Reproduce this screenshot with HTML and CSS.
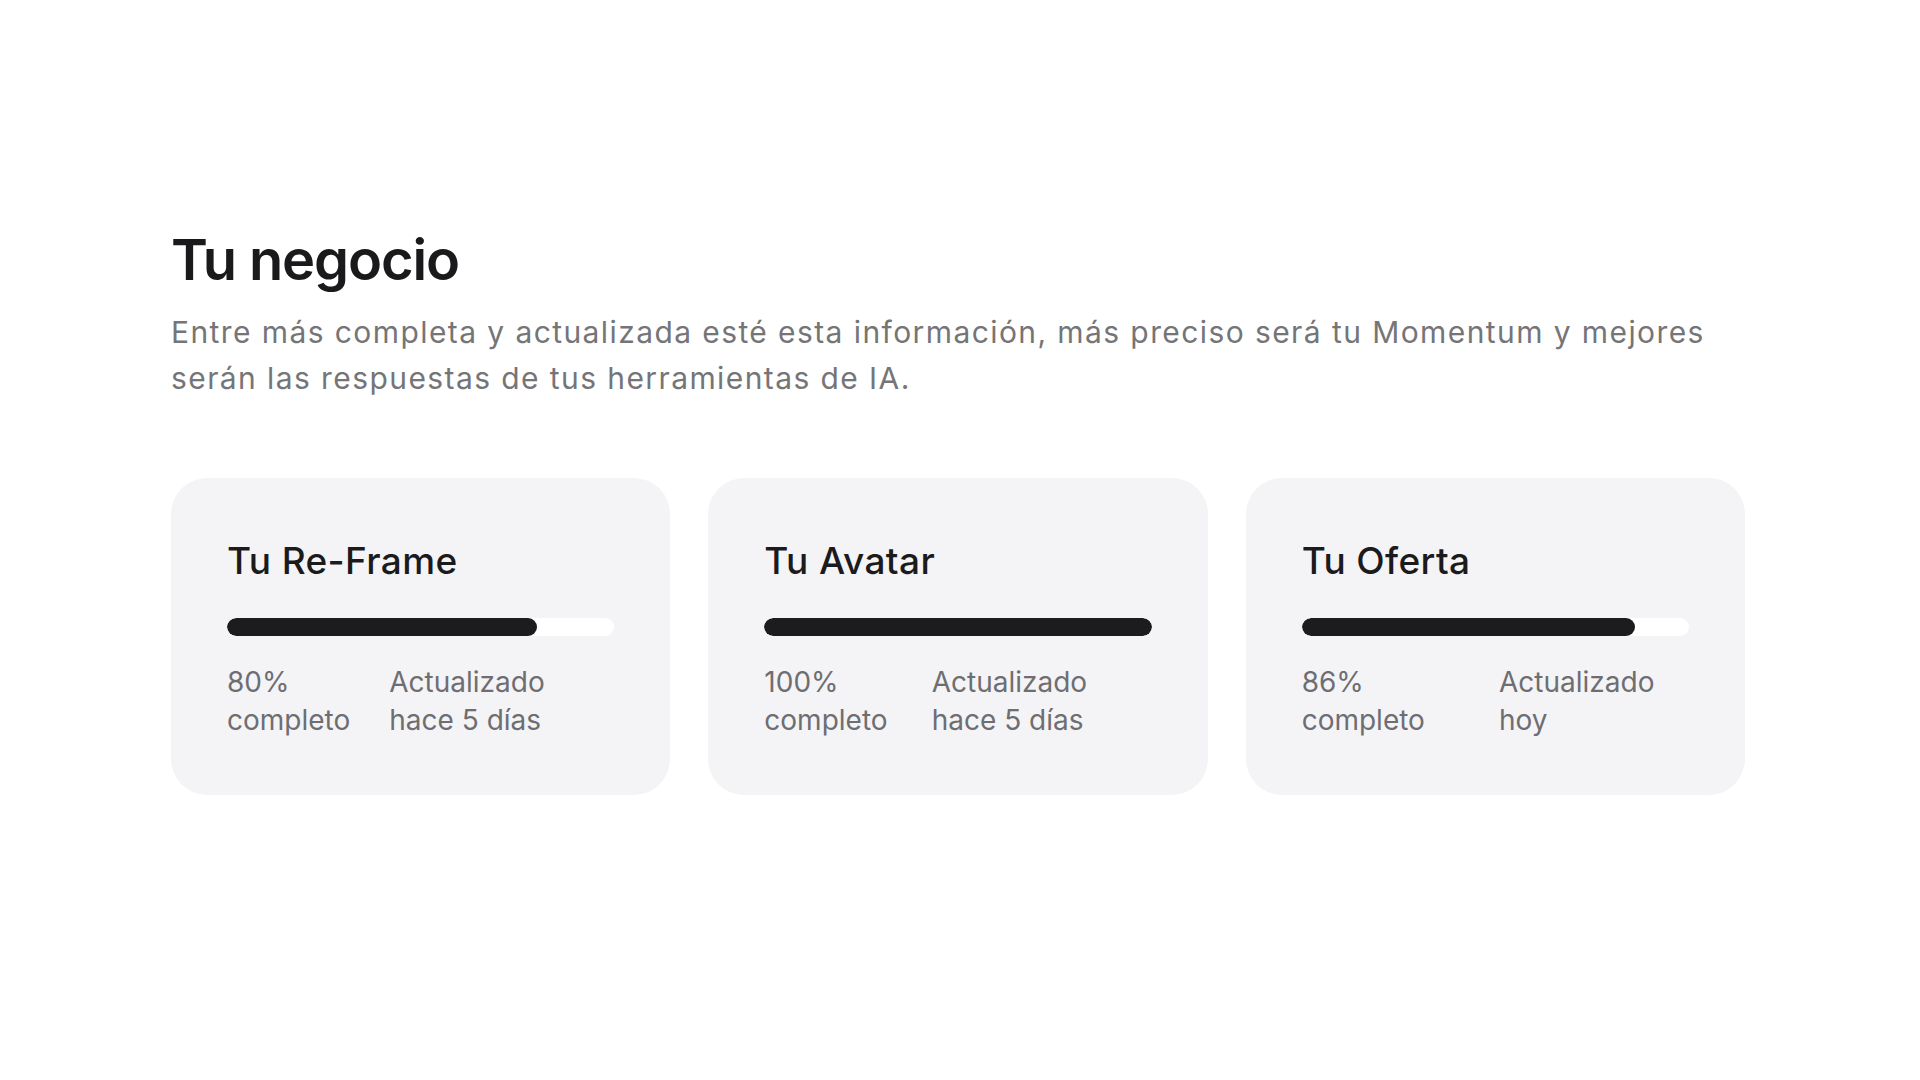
FILE: index.html
```html
<!DOCTYPE html>
<html lang="es">
<head>
<meta charset="utf-8">
<title>Tu negocio</title>
<link rel="stylesheet" href="styles.css">
</head>
<body>
<main class="page">
  <section class="business">
    <h1 class="title">Tu negocio</h1>
    <p class="lead">Entre más completa y actualizada esté esta información, más preciso será tu Momentum y mejores serán las respuestas de tus herramientas de IA.</p>
    <div class="cards">
      <article class="card">
        <h2 class="card-title">Tu Re-Frame</h2>
        <div class="track"><div class="fill" style="width:80%"></div></div>
        <div class="stats">
          <span class="stat">80% completo</span>
          <span class="stat">Actualizado hace 5 días</span>
        </div>
      </article>
      <article class="card">
        <h2 class="card-title">Tu Avatar</h2>
        <div class="track"><div class="fill" style="width:100%"></div></div>
        <div class="stats">
          <span class="stat">100% completo</span>
          <span class="stat">Actualizado hace 5 días</span>
        </div>
      </article>
      <article class="card">
        <h2 class="card-title">Tu Oferta</h2>
        <div class="track"><div class="fill" style="width:86%"></div></div>
        <div class="stats">
          <span class="stat">86% completo</span>
          <span class="stat">Actualizado hoy</span>
        </div>
      </article>
    </div>
  </section>
</main>
</body>
</html>
```

FILE: styles.css
```css
* { box-sizing: border-box; }
html, body { margin: 0; padding: 0; background: #ffffff; }
body {
  font-family: Inter, "Noto Sans", "Liberation Sans", sans-serif;
  color: #1b1b1d;
}
.page {
  padding: 227px 175px 0 171px;
}
.title {
  margin: 0;
  font-size: 56px;
  line-height: 1.2;
  font-weight: 600;
  letter-spacing: -0.02em;
  color: #1a1a1c;
}
.lead {
  margin: 16px 0 0;
  font-size: 30px;
  line-height: 45.5px;
  font-weight: 400;
  letter-spacing: 0.047em;
  color: #757578;
}
.cards {
  margin-top: 77px;
  display: grid;
  grid-template-columns: repeat(3, 1fr);
  gap: 38px;
}
.card {
  background: #f4f4f6;
  border-radius: 36px;
  padding: 56px;
}
.card-title {
  margin: 0;
  font-size: 37px;
  line-height: 54px;
  font-weight: 500;
  letter-spacing: 0.01em;
  color: #1b1b1d;
}
.track {
  margin-top: 30px;
  height: 18px;
  border-radius: 9px;
  background: #ffffff;
  overflow: hidden;
}
.fill {
  height: 100%;
  border-radius: 9px;
  background: #1c1c1f;
}
.stats {
  margin-top: 28px;
  display: flex;
  gap: 24px;
}
.stat {
  font-size: 28px;
  line-height: 37.5px;
  color: #6e6e72;
}
```
